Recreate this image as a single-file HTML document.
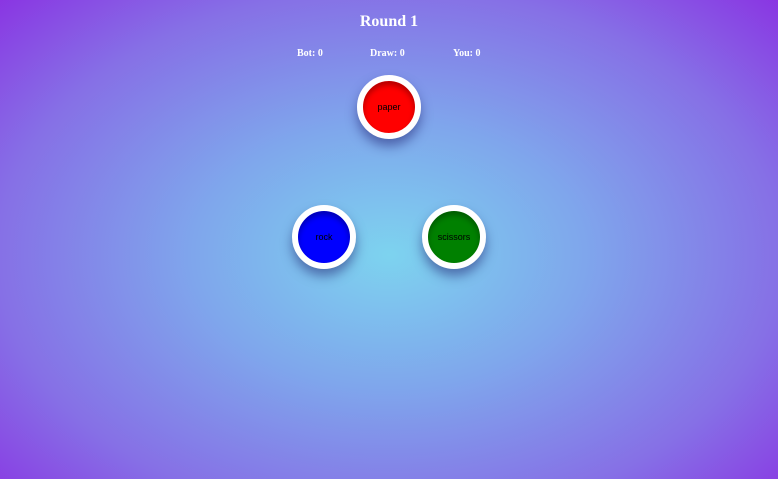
<!DOCTYPE html>
<html><head><style>
html,body{margin:0;padding:0;}
body{width:778px;height:479px;overflow:hidden;position:relative;
background:radial-gradient(ellipse 560px 380px at 389px 255px,#7dd3ef 0%,#7fa6ec 35%,#8670e6 70%,#8a2ee2 100%);
font-family:"Liberation Serif",serif;color:#fff;}
h1{position:absolute;top:12px;left:0;width:778px;text-align:center;margin:0;font-size:16px;font-weight:bold;line-height:20px;}
.s{position:absolute;top:48px;font-size:10px;font-weight:bold;line-height:12px;}
.b{position:absolute;width:52px;height:52px;border-radius:50%;border:6px solid #fff;
box-shadow:0 7px 11px rgba(30,30,110,.5), inset 0 4px 6px rgba(0,0,0,.3);
font-family:"Liberation Sans",sans-serif;font-size:9px;color:#000;text-align:center;line-height:52px;}
</style></head><body>
<h1>Round 1</h1>
<div class="s" style="left:297px">Bot: 0</div>
<div class="s" style="left:370px">Draw: 0</div>
<div class="s" style="left:453px">You: 0</div>
<div class="b" style="left:357px;top:75px;background:#f00">paper</div>
<div class="b" style="left:292px;top:205px;background:#00f">rock</div>
<div class="b" style="left:422px;top:205px;background:#008000">scissors</div>
</body></html>
